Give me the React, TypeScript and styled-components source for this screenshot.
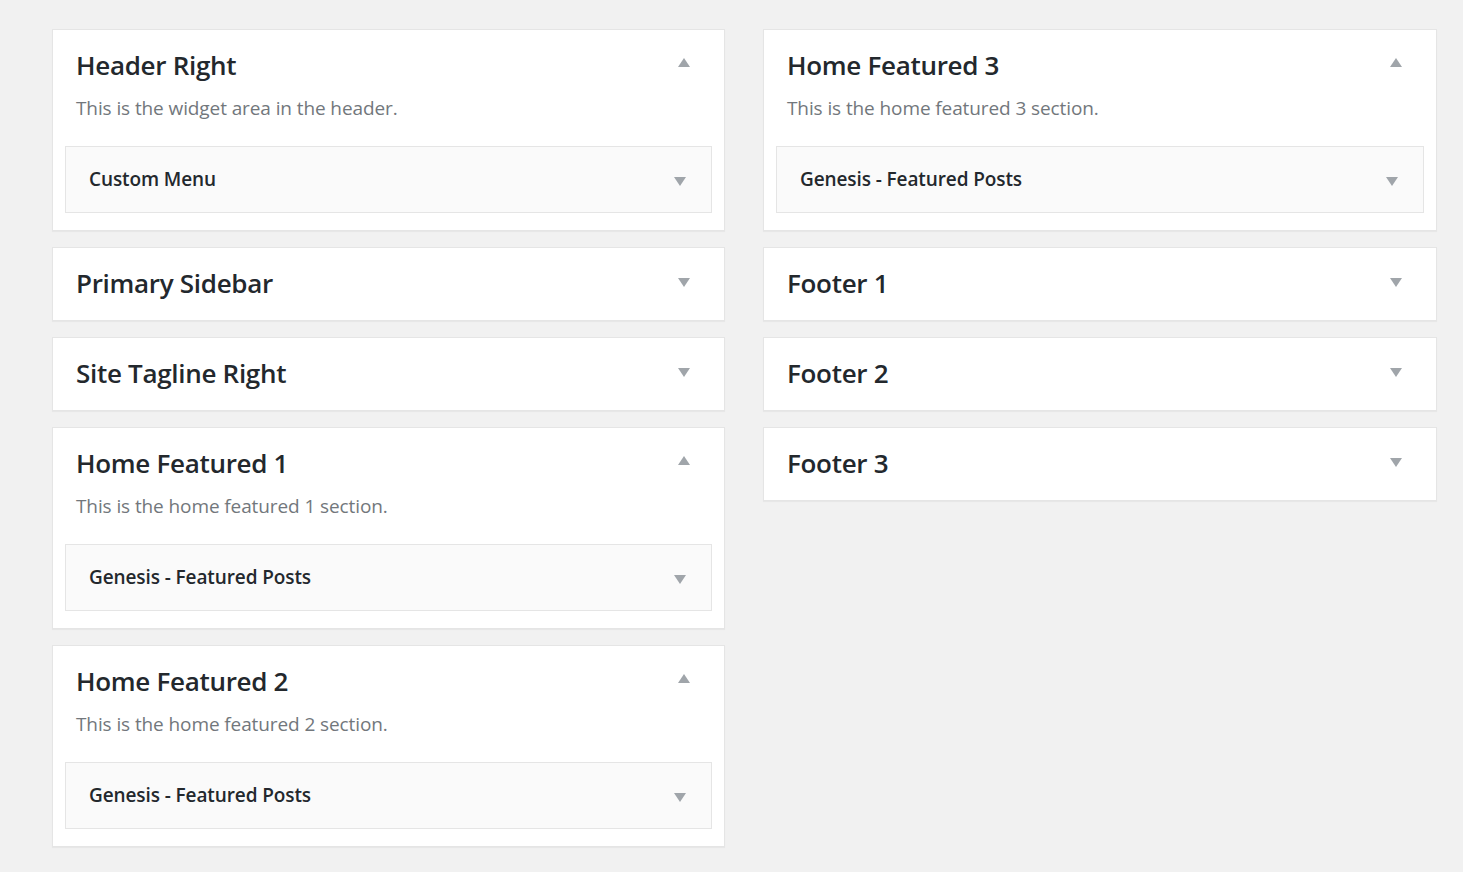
import React, { FC } from 'react';
import styled, { createGlobalStyle } from 'styled-components';

const GlobalStyle = createGlobalStyle`
  html, body {
    margin: 0;
    padding: 0;
    background: #f1f1f1;
    font-family: 'Open Sans', 'Noto Sans', sans-serif;
    -webkit-font-smoothing: antialiased;
  }
`;

const Page = styled.div`
  display: grid;
  grid-template-columns: 673px 674px;
  column-gap: 38px;
  align-items: start;
  padding: 29px 0 0 52px;
  min-height: 872px;
  box-sizing: border-box;
`;

const Column = styled.div`
  display: flex;
  flex-direction: column;
  gap: 16px;
`;

const Card = styled.div`
  background: #fff;
  border: 1px solid #e5e5e5;
  box-shadow: 0 1px 1px rgba(0, 0, 0, 0.04);
`;

const CardHeader = styled.div<{ $open: boolean }>`
  display: flex;
  align-items: center;
  justify-content: space-between;
  padding: ${p => (p.$open ? '17px 34px 0 23px' : '17px 34px 19px 23px')};
`;

const AreaTitle = styled.h2`
  margin: 0;
  font-size: 26px;
  line-height: 36px;
  font-weight: 600;
  letter-spacing: -0.3px;
  color: #23282d;
`;

const Description = styled.p`
  margin: 11px 0 0;
  padding: 0 23px;
  font-size: 19px;
  line-height: 28px;
  letter-spacing: -0.1px;
  color: #72777c;
`;

const Widgets = styled.div`
  padding: 24px 12px 17px;
`;

const Widget = styled.div`
  display: flex;
  align-items: center;
  justify-content: space-between;
  padding: 20px 25px 20px 23px;
  background: #fafafa;
  border: 1px solid #e5e5e5;
`;

const WidgetTitle = styled.h4`
  margin: 0;
  font-size: 19px;
  line-height: 25px;
  font-weight: 600;
  letter-spacing: -0.1px;
  color: #23282d;
`;

const ArrowIcon = styled.svg<{ $shift: number }>`
  display: block;
  flex-shrink: 0;
  fill: #a0a5aa;
  transform: translateY(${p => p.$shift}px);
`;

const Arrow: FC<{ up?: boolean; shift?: number }> = ({ up, shift = 0 }) => (
  <ArrowIcon width="12" height="9" viewBox="0 0 12 9" $shift={shift}>
    {up ? <polygon points="6,0 12,9 0,9" /> : <polygon points="0,0 12,0 6,9" />}
  </ArrowIcon>
);

interface Area {
  title: string;
  description?: string;
  widget?: string;
}

const SidebarArea: FC<Area> = ({ title, description, widget }) => {
  const open = Boolean(description);
  return (
    <Card>
      <CardHeader $open={open}>
        <AreaTitle>{title}</AreaTitle>
        <Arrow up={open} shift={open ? -3 : -1} />
      </CardHeader>
      {open && (
        <>
          <Description>{description}</Description>
          <Widgets>
            <Widget>
              <WidgetTitle>{widget}</WidgetTitle>
              <Arrow shift={2} />
            </Widget>
          </Widgets>
        </>
      )}
    </Card>
  );
};

const leftAreas: Area[] = [
  { title: 'Header Right', description: 'This is the widget area in the header.', widget: 'Custom Menu' },
  { title: 'Primary Sidebar' },
  { title: 'Site Tagline Right' },
  {
    title: 'Home Featured 1',
    description: 'This is the home featured 1 section.',
    widget: 'Genesis - Featured Posts',
  },
  {
    title: 'Home Featured 2',
    description: 'This is the home featured 2 section.',
    widget: 'Genesis - Featured Posts',
  },
];

const rightAreas: Area[] = [
  {
    title: 'Home Featured 3',
    description: 'This is the home featured 3 section.',
    widget: 'Genesis - Featured Posts',
  },
  { title: 'Footer 1' },
  { title: 'Footer 2' },
  { title: 'Footer 3' },
];

const App: FC = () => (
  <>
    <GlobalStyle />
    <Page>
      <Column>
        {leftAreas.map(a => (
          <SidebarArea key={a.title} {...a} />
        ))}
      </Column>
      <Column>
        {rightAreas.map(a => (
          <SidebarArea key={a.title} {...a} />
        ))}
      </Column>
    </Page>
  </>
);

export default App;
